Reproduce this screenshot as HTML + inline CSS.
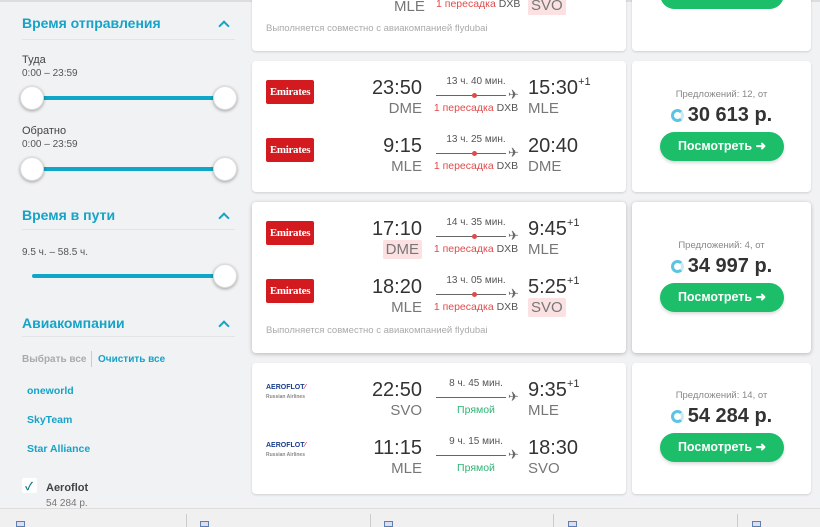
<!DOCTYPE html>
<html><head><meta charset="utf-8">
<style>
*{margin:0;padding:0;box-sizing:border-box}
body{width:820px;height:527px;overflow:hidden;background:#f1f2f4;font-family:"Liberation Sans","Noto Sans CJK SC",sans-serif;position:relative;color:#333}
.a{position:absolute}
.h{position:absolute;left:22px;font-size:14px;font-weight:bold;color:#16a3c7}
.chev{position:absolute;left:220px;width:8px;height:8px;border-left:2.5px solid #16a3c7;border-top:2.5px solid #16a3c7;transform:rotate(45deg)}
.div{position:absolute;left:22px;width:213px;height:1px;background:#e2e4e7}
.lbl{position:absolute;left:22px;font-size:11px;color:#444}
.sm{position:absolute;left:22px;font-size:10px;color:#555}
.track{position:absolute;height:4px;background:#10a6c7;border-radius:2px}
.knob{position:absolute;width:24px;height:24px;border-radius:50%;background:#fff;border:1px solid #ddd;box-shadow:0 1px 3px rgba(0,0,0,.35)}
.card{position:absolute;background:#fff;border-radius:4px;box-shadow:0 1px 2px rgba(0,0,0,.15)}
.row{position:absolute;left:252px;width:374px;height:40px}
.logo{position:absolute;left:14px;top:3px;width:48px;height:24px;background:#d31a1f;color:#fff;font-family:"Liberation Serif",serif;font-weight:bold;font-size:11px;text-align:center;line-height:24px;border-radius:2px;letter-spacing:-.3px}
.afl{position:absolute;left:14px;top:4px;width:48px;height:18px;font-size:7px;font-weight:bold;color:#1a3c8a;line-height:9px}
.dt{position:absolute;left:90px;width:80px;text-align:right;top:0;font-size:20px;line-height:22px;color:#333}
.dc{position:absolute;left:90px;width:80px;text-align:right;top:23px;font-size:15px;line-height:17px;color:#777}
.dc span,.ac span{background:#fbe1e1;padding:1px 3px;border-radius:2px}
.du{position:absolute;left:184px;width:80px;text-align:center;top:-1px;font-size:10px;color:#555}
.ln{position:absolute;left:184px;width:70px;top:18px;height:1px;background:#666}
.dot{position:absolute;left:220px;top:16px;width:5px;height:5px;border-radius:50%;background:#e04a4a}
.pl{position:absolute;left:256px;top:10px;font-size:13px;color:#666}
.tr{position:absolute;left:174px;width:100px;text-align:center;top:25px;font-size:10.5px;color:#e04a4a}
.tr b{font-weight:normal;color:#555}
.tr.g{color:#2cb574}
.at{position:absolute;left:276px;top:0;font-size:20px;line-height:22px;color:#333;white-space:nowrap}
.at sup{font-size:11px;position:relative;top:-9px;vertical-align:baseline;line-height:0}
.ac{position:absolute;left:276px;top:23px;font-size:15px;line-height:17px;color:#777}
.foot{position:absolute;left:266px;font-size:9.5px;color:#aaa}
.pr{position:absolute;left:632px;width:179px;text-align:center}
.of{font-size:9.5px;color:#888}
.price{font-size:20px;font-weight:bold;color:#333;margin-top:4px;line-height:22px}
.ring{display:inline-block;width:13px;height:13px;border-radius:50%;border:3px solid #5cc4e3;border-right-color:#cdeaf4;vertical-align:-1px;margin-right:4px}
.btn{position:absolute;left:660px;width:124px;height:29px;border-radius:15px;background:#1cbe6a;color:#fff;font-weight:bold;font-size:12.5px;text-align:center;line-height:29px;box-shadow:0 2px 3px rgba(0,0,0,.15)}
</style></head><body>

<div class="a" style="left:0;top:0;width:820px;height:2px;background:#ddd"></div>
<div class="h" style="top:15px">Время отправления</div><div class="chev" style="top:22px"></div>
<div class="div" style="top:39px"></div>
<div class="lbl" style="top:54px">Туда</div>
<div class="sm" style="top:68px">0:00 – 23:59</div>
<div class="track" style="left:34px;width:190px;top:96px"></div>
<div class="knob" style="left:20px;top:86px"></div><div class="knob" style="left:213px;top:86px"></div>
<div class="lbl" style="top:125px">Обратно</div>
<div class="sm" style="top:139px">0:00 – 23:59</div>
<div class="track" style="left:34px;width:190px;top:167px"></div>
<div class="knob" style="left:20px;top:157px"></div><div class="knob" style="left:213px;top:157px"></div>

<div class="h" style="top:207px">Время в пути</div><div class="chev" style="top:214px"></div>
<div class="div" style="top:229px"></div>
<div class="sm" style="top:247px">9.5 ч. – 58.5 ч.</div>
<div class="track" style="left:32px;width:192px;top:274px"></div>
<div class="knob" style="left:213px;top:264px"></div>

<div class="h" style="top:315px">Авиакомпании</div><div class="chev" style="top:322px"></div>
<div class="div" style="top:336px"></div>
<div class="a" style="left:22px;top:354px;font-size:10px;font-weight:bold;color:#aaa">Выбрать все</div>
<div class="a" style="left:91px;top:351px;width:1px;height:16px;background:#ccc"></div>
<div class="a" style="left:98px;top:354px;font-size:10px;font-weight:bold;color:#16a3c7">Очистить все</div>
<div class="a" style="left:27px;top:385px;font-size:10.5px;font-weight:bold;color:#16a3c7">oneworld</div>
<div class="a" style="left:27px;top:414px;font-size:10.5px;font-weight:bold;color:#16a3c7">SkyTeam</div>
<div class="a" style="left:27px;top:443px;font-size:10.5px;font-weight:bold;color:#16a3c7">Star Alliance</div>
<div class="a" style="left:22px;top:478px;width:15px;height:15px;background:#fff;border-radius:2px"></div>
<div class="a" style="left:25px;top:478px;font-size:11px;font-weight:bold;color:#167a8a">✓</div>
<div class="a" style="left:46px;top:482px;font-size:11px;font-weight:bold;color:#444">Aeroflot</div>
<div class="a" style="left:46px;top:498px;font-size:10px;color:#777">54 284 р.</div>

<div class="card" style="left:252px;top:-10px;width:374px;height:61px"></div>
<div class="card" style="left:632px;top:-10px;width:179px;height:61px"></div>
<div class="a" style="left:394px;top:-2px;font-size:15px;color:#777">MLE</div>
<div class="a" style="left:436px;top:-2px;font-size:10.5px;color:#e04a4a">1 пересадка <span style="color:#555">DXB</span></div>
<div class="a" style="left:528px;top:-4px;font-size:15px;color:#777;background:#fbe1e1;padding:1px 3px">SVO</div>
<div class="foot" style="top:23px">Выполняется совместно с авиакомпанией flydubai</div>
<div class="a" style="left:660px;top:-20px;width:124px;height:29px;border-radius:15px;background:#1cbe6a"></div>

<div class="card" style="left:252px;top:61px;width:374px;height:131px"></div>
<div class="card" style="left:632px;top:61px;width:179px;height:131px"></div>
<div class="row" style="top:77px"><div class="logo">Emirates</div><div class="dt">23:50</div><div class="dc">DME</div><div class="du">13 ч. 40 мин.</div><div class="ln"></div><div class="dot"></div><div class="pl">✈</div><div class="tr">1 пересадка <b>DXB</b></div><div class="at">15:30<sup>+1</sup></div><div class="ac">MLE</div></div>
<div class="row" style="top:135px"><div class="logo">Emirates</div><div class="dt">9:15</div><div class="dc">MLE</div><div class="du">13 ч. 25 мин.</div><div class="ln"></div><div class="dot"></div><div class="pl">✈</div><div class="tr">1 пересадка <b>DXB</b></div><div class="at">20:40</div><div class="ac">DME</div></div>
<div class="pr" style="top:89px"><div class="of">Предложений: 12, от</div><div class="price"><span class="ring"></span>30 613 р.</div></div>
<div class="btn" style="top:132px">Посмотреть ➜</div>

<div class="card" style="left:252px;top:202px;width:374px;height:151px;box-shadow:0 1px 4px rgba(0,0,0,.25)"></div>
<div class="card" style="left:632px;top:202px;width:179px;height:151px;box-shadow:0 1px 4px rgba(0,0,0,.25)"></div>
<div class="row" style="top:218px"><div class="logo">Emirates</div><div class="dt">17:10</div><div class="dc"><span>DME</span></div><div class="du">14 ч. 35 мин.</div><div class="ln"></div><div class="dot"></div><div class="pl">✈</div><div class="tr">1 пересадка <b>DXB</b></div><div class="at">9:45<sup>+1</sup></div><div class="ac">MLE</div></div>
<div class="row" style="top:276px"><div class="logo">Emirates</div><div class="dt">18:20</div><div class="dc">MLE</div><div class="du">13 ч. 05 мин.</div><div class="ln"></div><div class="dot"></div><div class="pl">✈</div><div class="tr">1 пересадка <b>DXB</b></div><div class="at">5:25<sup>+1</sup></div><div class="ac"><span>SVO</span></div></div>
<div class="foot" style="top:325px">Выполняется совместно с авиакомпанией flydubai</div>
<div class="pr" style="top:240px"><div class="of">Предложений: 4, от</div><div class="price"><span class="ring"></span>34 997 р.</div></div>
<div class="btn" style="top:283px">Посмотреть ➜</div>

<div class="card" style="left:252px;top:363px;width:374px;height:131px"></div>
<div class="card" style="left:632px;top:363px;width:179px;height:131px"></div>
<div class="row" style="top:379px"><div class="afl">AEROFLOT<span style="color:#e03030">⁄</span><br><span style="font-size:5px;color:#888">Russian Airlines</span></div><div class="dt">22:50</div><div class="dc">SVO</div><div class="du">8 ч. 45 мин.</div><div class="ln"></div><div class="pl">✈</div><div class="tr g">Прямой</div><div class="at">9:35<sup>+1</sup></div><div class="ac">MLE</div></div>
<div class="row" style="top:437px"><div class="afl">AEROFLOT<span style="color:#e03030">⁄</span><br><span style="font-size:5px;color:#888">Russian Airlines</span></div><div class="dt">11:15</div><div class="dc">MLE</div><div class="du">9 ч. 15 мин.</div><div class="ln"></div><div class="pl">✈</div><div class="tr g">Прямой</div><div class="at">18:30</div><div class="ac">SVO</div></div>
<div class="pr" style="top:390px"><div class="of">Предложений: 14, от</div><div class="price"><span class="ring"></span>54 284 р.</div></div>
<div class="btn" style="top:433px">Посмотреть ➜</div>

<div class="a" style="left:0;top:508px;width:820px;height:19px;background:#f0f0f0;border-top:1px solid #ddd"></div>
<div class="a" style="left:186px;top:514px;width:1px;height:13px;background:#ccc"></div>
<div class="a" style="left:370px;top:514px;width:1px;height:13px;background:#ccc"></div>
<div class="a" style="left:553px;top:514px;width:1px;height:13px;background:#ccc"></div>
<div class="a" style="left:737px;top:514px;width:1px;height:13px;background:#ccc"></div>
<div class="a" style="left:16px;top:521px;width:9px;height:6px;border:1px solid #5a7fb0;background:#dde"></div>
<div class="a" style="left:200px;top:521px;width:9px;height:6px;border:1px solid #5a7fb0;background:#dde"></div>
<div class="a" style="left:384px;top:521px;width:9px;height:6px;border:1px solid #5a7fb0;background:#dde"></div>
<div class="a" style="left:568px;top:521px;width:9px;height:6px;border:1px solid #5a7fb0;background:#dde"></div>
<div class="a" style="left:752px;top:521px;width:9px;height:6px;border:1px solid #5a7fb0;background:#dde"></div>
</body></html>
